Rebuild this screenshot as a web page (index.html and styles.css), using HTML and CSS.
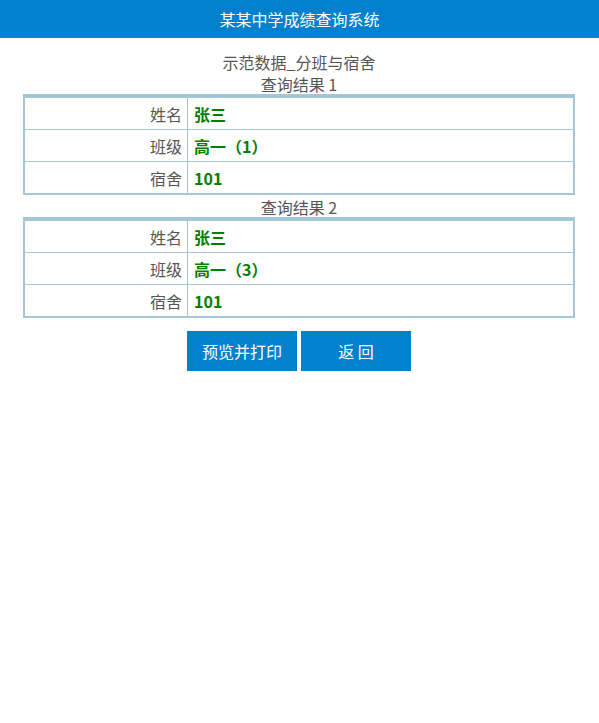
FILE: index.html
```html
<!DOCTYPE html>
<html lang="zh-CN">
<head>
<meta charset="utf-8">
<title>某某中学成绩查询系统</title>
<link rel="stylesheet" href="styles.css">
</head>
<body>
<header class="topbar">某某中学成绩查询系统</header>
<main class="content">
  <div class="heading">示范数据_分班与宿舍</div>
  <div class="caption">查询结果 1</div>
  <table class="result">
    <tr><td class="label">姓名</td><td class="value">张三</td></tr>
    <tr><td class="label">班级</td><td class="value">高一（1）</td></tr>
    <tr class="last"><td class="label">宿舍</td><td class="value">101</td></tr>
  </table>
  <div class="caption">查询结果 2</div>
  <table class="result">
    <tr><td class="label">姓名</td><td class="value">张三</td></tr>
    <tr><td class="label">班级</td><td class="value">高一（3）</td></tr>
    <tr class="last"><td class="label">宿舍</td><td class="value">101</td></tr>
  </table>
  <div class="actions">
    <button class="btn" type="button">预览并打印</button>
    <button class="btn" type="button">返 回</button>
  </div>
</main>
</body>
</html>
```
FILE: styles.css
```css
html, body {
  margin: 0;
  padding: 0;
  background: #ffffff;
}
body {
  font-family: "Noto Sans CJK SC", "Noto Sans", sans-serif;
  font-size: 16px;
  color: #555555;
}
.topbar {
  height: 38px;
  line-height: 38px;
  background: #0181cd;
  color: #ffffff;
  text-align: center;
  font-size: 16px;
}
.content {
  padding: 14px 24px 0 23px;
}
.heading {
  text-align: center;
  line-height: 20px;
}
.caption {
  text-align: center;
  line-height: 20px;
  padding-top: 2px;
}
.result {
  width: 100%;
  border-collapse: separate;
  border-spacing: 0;
  border: 2px solid #a5c7d5;
  border-top-width: 4px;
}
.result td {
  height: 31px;
  padding: 0;
  border-bottom: 1px solid #a5c7d5;
}
.result tr.last td {
  border-bottom: none;
}
.result .label {
  width: 163px;
  text-align: right;
  padding-right: 5px;
  border-right: 1px solid #a5c7d5;
  box-sizing: border-box;
  color: #555555;
}
.result .value {
  padding-left: 6px;
  color: #008000;
  font-weight: bold;
}
.actions {
  display: flex;
  justify-content: center;
  gap: 4px;
  margin-top: 13px;
}
.btn {
  width: 110px;
  height: 40px;
  border: none;
  margin: 0;
  padding: 0;
  background: #0181cd;
  color: #ffffff;
  font-family: "Noto Sans CJK SC", "Noto Sans", sans-serif;
  font-size: 16px;
}
```
